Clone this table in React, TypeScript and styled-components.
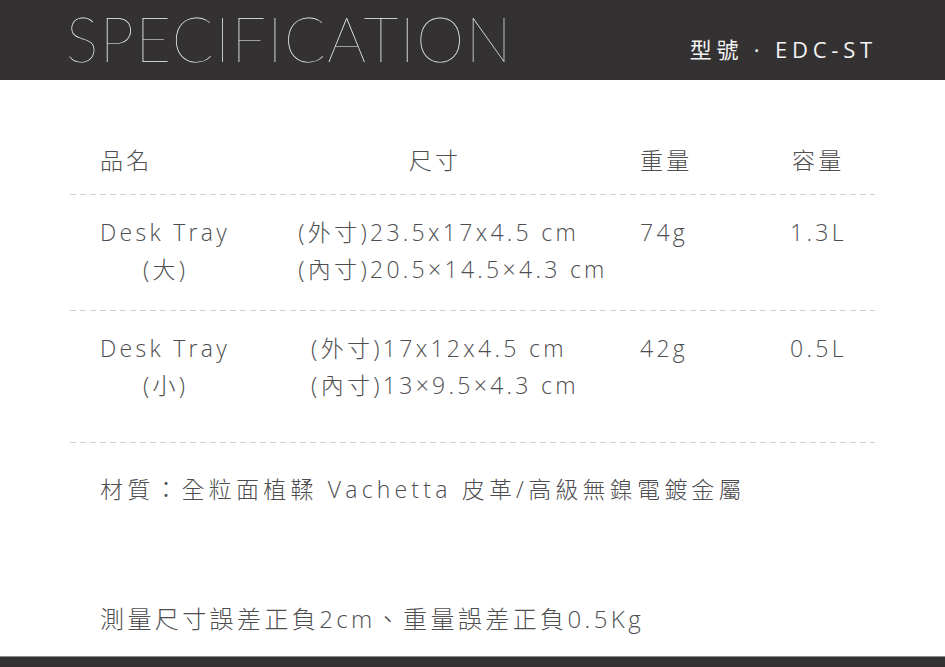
import styled, {createGlobalStyle} from 'styled-components'

const GlobalStyle = createGlobalStyle`
  html, body {
    margin: 0;
    padding: 0;
    background: #ffffff;
  }
  body {
    font-family: 'Open Sans', 'Noto Sans CJK TC', sans-serif;
  }
`

export const Page = styled.div`
  width: 945px;
  height: 667px;
  display: flex;
  flex-direction: column;
  overflow: hidden;
`
export const Header = styled.header`
  height: 80px;
  flex: none;
  background: #333132;
  display: flex;
  align-items: center;
  justify-content: space-between;
  padding: 0 68px 0 66px;
`
export const Title = styled.h1`
  margin: 0;
  font-family: 'Lato', 'Liberation Sans', sans-serif;
  font-weight: 100;
  font-size: 61px;
  letter-spacing: 1.6px;
  color: #f4f4f4;
  line-height: 1;
  padding-bottom: 4px;
`
export const Model = styled.div`
  font-size: 22px;
  letter-spacing: 4.8px;
  color: #f4f4f4;
  padding-top: 16px;
`
export const Body = styled.main`
  flex: 1;
  padding: 0 70px;
  color: #4e4e50;
  font-weight: 300;
`
export const Row = styled.div<{$pt: number; $pb: number}>`
  display: grid;
  grid-template-columns: 200px 340px 160px 105px;
  padding: ${p => p.$pt}px 0 ${p => p.$pb}px;
  font-size: 23px;
  letter-spacing: 3.3px;
  line-height: 37px;
`
export const Dashed = styled.div`
  height: 1px;
  background-image: linear-gradient(to right, #cfcfcf 6px, transparent 6px);
  background-size: 10px 1px;
  background-repeat: repeat-x;
`
export const NameCell = styled.div`
  padding-left: 30px;
  display: flex;
  flex-direction: column;
`
export const SubName = styled.span`
  padding-left: 43px;
`
export const SizeCell = styled.div<{$shift: number}>`
  display: flex;
  justify-content: center;
  margin-left: ${p => p.$shift}px;
`
export const SizeLines = styled.div`
  display: flex;
  flex-direction: column;
`
export const ValueCell = styled.div<{$pl: number}>`
  padding-left: ${p => p.$pl}px;
`
export const Note = styled.p<{$mt: number}>`
  margin: ${p => p.$mt}px 0 0 30px;
  font-size: 23px;
  letter-spacing: 4.2px;
  line-height: 37px;
`
export const Tolerance = styled.p`
  margin: 92px 0 0 30px;
  font-size: 24px;
  letter-spacing: 3.4px;
  line-height: 37px;
`
export const Footer = styled.footer`
  height: 10px;
  flex: none;
  background: #333132;
  border-top: 1px solid #8a8a8a;
`

type Item = {
  name: string
  size: string
  outer: string
  inner: string
  weight: string
  capacity: string
  shift: number
  pb: number
}

const items: Item[] = [
  {
    name: 'Desk Tray',
    size: '(大)',
    outer: '(外寸)23.5x17x4.5 cm',
    inner: '(內寸)20.5×14.5×4.3 cm',
    weight: '74g',
    capacity: '1.3L',
    shift: 26,
    pb: 22,
  },
  {
    name: 'Desk Tray',
    size: '(小)',
    outer: '(外寸)17x12x4.5 cm',
    inner: '(內寸)13×9.5×4.3 cm',
    weight: '42g',
    capacity: '0.5L',
    shift: 10,
    pb: 38,
  },
]

export default function App() {
  return (
    <Page>
      <GlobalStyle />
      <Header>
        <Title>SPECIFICATION</Title>
        <Model>型號 · EDC-ST</Model>
      </Header>
      <Body>
        <Row $pt={62} $pb={15}>
          <NameCell>品名</NameCell>
          <SizeCell $shift={-10}>尺寸</SizeCell>
          <ValueCell $pl={30}>重量</ValueCell>
          <ValueCell $pl={22}>容量</ValueCell>
        </Row>
        <Dashed />
        {items.map((it, i) => (
          <div key={i}>
            <Row $pt={19} $pb={it.pb}>
              <NameCell>
                <span>{it.name}</span>
                <SubName>{it.size}</SubName>
              </NameCell>
              <SizeCell $shift={it.shift}>
                <SizeLines>
                  <span>{it.outer}</span>
                  <span>{it.inner}</span>
                </SizeLines>
              </SizeCell>
              <ValueCell $pl={30}>{it.weight}</ValueCell>
              <ValueCell $pl={20}>{it.capacity}</ValueCell>
            </Row>
            <Dashed />
          </div>
        ))}
        <Note $mt={28}>材質：全粒面植鞣 Vachetta 皮革/高級無鎳電鍍金屬</Note>
        <Tolerance>測量尺寸誤差正負2cm、重量誤差正負0.5Kg</Tolerance>
      </Body>
      <Footer />
    </Page>
  )
}
